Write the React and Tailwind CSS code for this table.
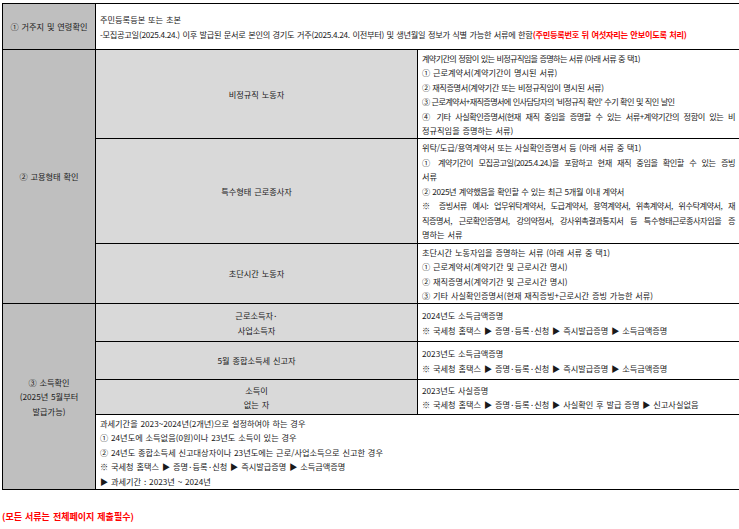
import React from 'react';

// one visual line of text; "j" lines are justified to the cell width
function L({ children, className = '' }) {
    return <div className={`whitespace-nowrap ${className}`}>{children}</div>;
}

const J = '[text-align-last:justify] tracking-[-0.5px]';
const head = 'border border-black bg-[#bfbfbf] text-center align-middle';
const sub = 'border border-black bg-[#d9d9d9] text-center align-middle';
const body = 'border border-black bg-white px-[4px] align-middle text-left';
const route = '※ 국세청 홈택스 ▶ 증명·등록·신청 ▶ 즉시발급증명 ▶ 소득금액증명';

export default function App() {
    return (
        <div className="min-h-[529px] w-[739px] bg-white pt-[3px] pl-[2px] font-['Noto_Sans_CJK_KR','Noto_Sans',sans-serif] text-[8.2px] leading-[14.5px] text-[#1a1a1a] [word-spacing:1px]">
            <table className="w-[737px] table-fixed border-collapse border border-black">
                <colgroup>
                    <col className="w-[93px]" />
                    <col className="w-[322px]" />
                    <col className="w-[322px]" />
                </colgroup>
                <tbody>
                    <tr className="h-[46px]">
                        <td className={head}>① 거주지 및 연령확인</td>
                        <td colSpan={2} className={body}>
                            <L>주민등록등본 또는 초본</L>
                            <L className="tracking-[-0.27px]">
                                -모집공고일(2025.4.24.) 이후 발급된 문서로 본인의 경기도 거주(2025.4.24. 이전부터) 및 생년월일 정보가 식별 가능한 서류에 한함
                                <span className="font-bold text-[#ff0000]">(주민등록번호 뒤 여섯자리는 안보이도록 처리)</span>
                            </L>
                        </td>
                    </tr>

                    <tr className="h-[89px]">
                        <td rowSpan={3} className={head}>② 고용형태 확인</td>
                        <td className={sub}>비정규직 노동자</td>
                        <td className={body}>
                            <L className="tracking-[-0.72px]">계약기간의 정함이 있는 비정규직임을 증명하는 서류 (아래 서류 중 택1)</L>
                            <L>① 근로계약서(계약기간이 명시된 서류)</L>
                            <L className="tracking-[-0.4px]">② 재직증명서(계약기간 또는 비정규직임이 명시된 서류)</L>
                            <L className="tracking-[-0.7px]">③ 근로계약서+재직증명서에 인사담당자의 '비정규직 확인' 수기 확인 및 직인 날인</L>
                            <L className={J}>④ 기타 사실확인증명서(현재 재직 중임을 증명할 수 있는 서류+계약기간의 정함이 있는 비</L>
                            <L>정규직임을 증명하는 서류)</L>
                        </td>
                    </tr>
                    <tr className="h-[105px]">
                        <td className={sub}>특수형태 근로종사자</td>
                        <td className={body}>
                            <L className="tracking-[-0.15px]">위탁/도급/용역계약서 또는 사실확인증명서 등 (아래 서류 중 택1)</L>
                            <L className={J}>① 계약기간이 모집공고일(2025.4.24.)을 포함하고 현재 재직 중임을 확인할 수 있는 증빙</L>
                            <L>서류</L>
                            <L className="tracking-[-0.35px]">② 2025년 계약했음을 확인할 수 있는 최근 5개월 이내 계약서</L>
                            <L className={J}>※ 증빙서류 예시: 업무위탁계약서, 도급계약서, 용역계약서, 위촉계약서, 위수탁계약서, 재</L>
                            <L className={J}>직증명서, 근로확인증명서, 강의약정서, 강사위촉결과통지서 등 특수형태근로종사자임을 증</L>
                            <L>명하는 서류</L>
                        </td>
                    </tr>
                    <tr className="h-[60px]">
                        <td className={sub}>초단시간 노동자</td>
                        <td className={body}>
                            <L>초단시간 노동자임을 증명하는 서류 (아래 서류 중 택1)</L>
                            <L>① 근로계약서(계약기간 및 근로시간 명시)</L>
                            <L>② 재직증명서(계약기간 및 근로시간 명시)</L>
                            <L>③ 기타 사실확인증명서(현재 재직증빙+근로시간 증빙 가능한 서류)</L>
                        </td>
                    </tr>

                    <tr className="h-[38px]">
                        <td rowSpan={4} className={head}>
                            <L>③ 소득확인</L>
                            <L>(2025년 5월부터</L>
                            <L>발급가능)</L>
                        </td>
                        <td className={sub}>
                            <L>근로소득자·</L>
                            <L>사업소득자</L>
                        </td>
                        <td className={body}>
                            <L>2024년도 소득금액증명</L>
                            <L>{route}</L>
                        </td>
                    </tr>
                    <tr className="h-[38px]">
                        <td className={sub}>5월 종합소득세 신고자</td>
                        <td className={body}>
                            <L>2023년도 소득금액증명</L>
                            <L>{route}</L>
                        </td>
                    </tr>
                    <tr className="h-[35px]">
                        <td className={sub}>
                            <L>소득이</L>
                            <L>없는 자</L>
                        </td>
                        <td className={body}>
                            <L>2023년도 사실증명</L>
                            <L>※ 국세청 홈택스 ▶ 증명·등록·신청 ▶ 사실확인 후 발급 증명 ▶ 신고사실없음</L>
                        </td>
                    </tr>
                    <tr className="h-[75px]">
                        <td colSpan={2} className={body}>
                            <L>과세기간을 2023~2024년(2개년)으로 설정하여야 하는 경우</L>
                            <L>① 24년도에 소득없음(0원)이나 23년도 소득이 있는 경우</L>
                            <L>② 24년도 종합소득세 신고대상자이나 23년도에는 근로/사업소득으로 신고한 경우</L>
                            <L>{route}</L>
                            <L>▶ 과세기간 : 2023년 ~ 2024년</L>
                        </td>
                    </tr>
                </tbody>
            </table>

            <div className="mt-[20px] text-[9px] font-bold text-[#ff0000]">(모든 서류는 전체페이지 제출필수)</div>
        </div>
    );
}
